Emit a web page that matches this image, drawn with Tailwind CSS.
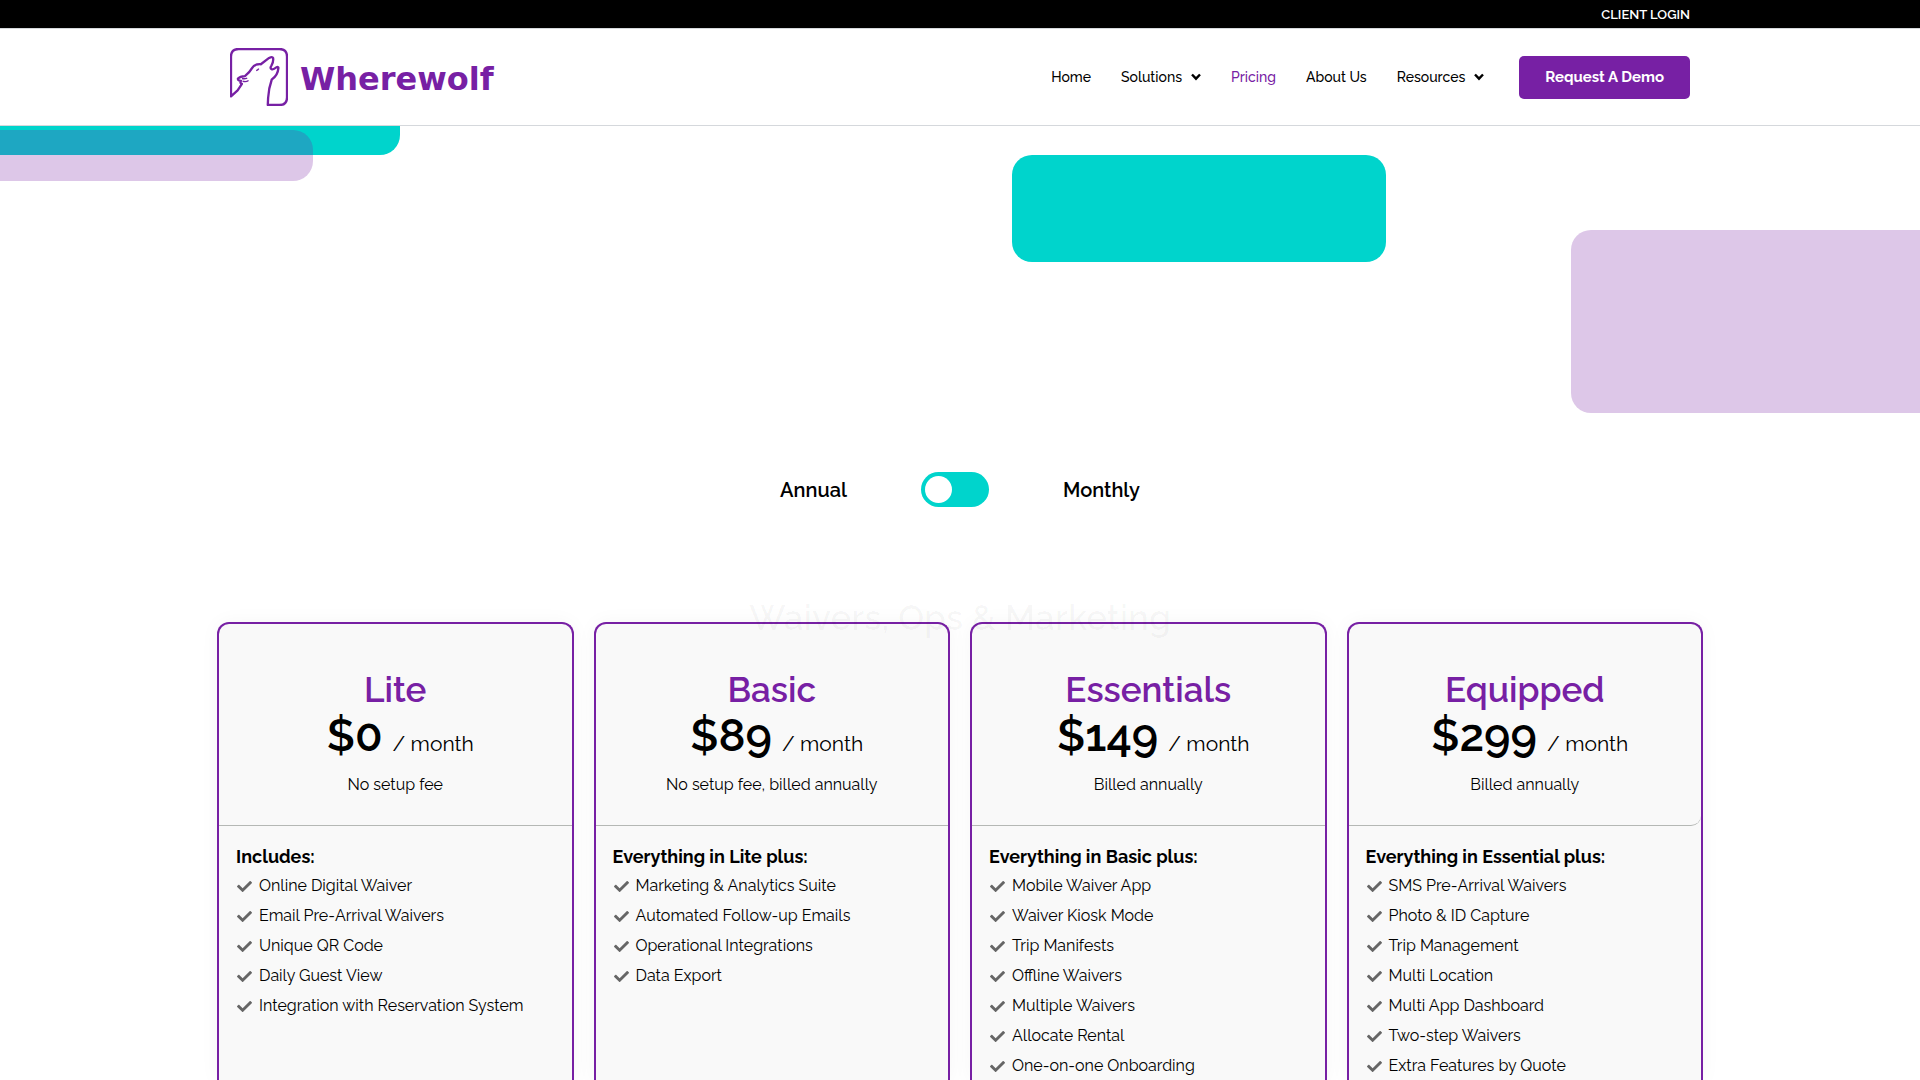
<!DOCTYPE html>
<html lang="en">
<head>
<meta charset="utf-8">
<title>Pricing – Wherewolf</title>
<script src="https://cdn.jsdelivr.net/npm/@tailwindcss/browser@4"></script>
</head>
<body class="flex h-screen flex-col overflow-hidden bg-white font-['Raleway','Open_Sans',sans-serif] text-black">
<svg class="hidden" aria-hidden="true">
  <symbol id="check" viewBox="0 0 512 512"><path fill="currentColor" d="M173.9 439.4l-166.4-166.4c-10-10-10-26.200 0-36.200l36.200-36.200c10-10 26.200-10 36.200 0L192 312.700 432.100 72.600c10-10 26.200-10 36.200 0l36.200 36.200c10 10 10 26.200 0 36.200l-294.400 294.400c-10 10-26.200 10-36.200 0z"/></symbol>
  <symbol id="chevron" viewBox="0 0 10 8"><path fill="none" stroke="currentColor" stroke-width="2.400" d="M1 1.500 5 5.700 9 1.500"/></symbol>
</svg>

<div class="h-7 shrink-0 bg-black">
  <div class="mx-auto flex h-full max-w-[1460px] items-end justify-end pb-[3px]">
    <a href="#" class="text-[13px] font-semibold leading-5 text-white">CLIENT LOGIN</a>
  </div>
</div>

<header class="h-[98px] shrink-0 border-y border-[#d5d8dc] bg-white">
  <div class="mx-auto flex h-full max-w-[1460px] items-center justify-between">
    <a href="#" class="flex items-center gap-3 text-[#7720a4]" aria-label="Wherewolf">
      <svg class="size-[58px]" viewBox="12 12 175 175" fill="none" stroke="currentColor" stroke-width="7" stroke-linejoin="round">
        <path d="M15 158V38Q15 15 38 15H161Q184 15 184 38V161Q184 184 161 184H126L127 163Q129 132 138 107Q156 96 158 73Q159 67 151 71Q144 78 137 76Q132 72 137 65Q144 53 142 42Q140 37 130 42L105 61Q86 60 79 72Q71 86 57 97Q42 98 36 104Q35 110 45 111Q41 119 48 120L35 140Z"/>
        <path stroke-width="4" d="M91 80Q96 79 99 74M48 104Q56 106 64 103M50 112Q60 116 68 110"/>
      </svg>
      <span class="pt-1 font-['DejaVu_Sans',sans-serif] text-[32px] font-bold leading-10">Wherewolf</span>
    </a>
    <nav class="flex items-center gap-[30px] text-sm font-medium">
      <a href="#">Home</a>
      <a href="#" class="flex items-center gap-[9px]">Solutions <svg class="h-2 w-[10px]"><use href="#chevron"/></svg></a>
      <a href="#" class="text-[#7720a4]">Pricing</a>
      <a href="#">About Us</a>
      <a href="#" class="flex items-center gap-[9px]">Resources <svg class="h-2 w-[10px]"><use href="#chevron"/></svg></a>
      <button type="button" class="ml-[5px] h-[43px] rounded-[5px] bg-[#7720a4] px-[26px] pt-px text-[15px] font-bold text-white">Request A Demo</button>
    </nav>
  </div>
</header>

<main class="flex flex-1 flex-col">
  <section class="relative flex h-[496px] shrink-0 justify-center overflow-hidden pt-[346px]">
    <!-- decorative blocks behind the hero -->
    <div class="absolute left-0 top-0 h-[29px] w-[400px] rounded-br-[20px] bg-[#00d4cc]"></div>
    <div class="absolute left-0 top-1 h-[51px] w-[313px] rounded-r-[20px] bg-[#7720a4]/25"></div>
    <div class="absolute left-[1012px] top-[29px] h-[107px] w-[374px] rounded-[20px] bg-[#00d4cc]"></div>
    <div class="absolute right-0 top-[104px] h-[183px] w-[349px] rounded-l-[20px] bg-[#7720a4]/25"></div>

    <div class="flex h-[35px] items-center gap-[74px] text-xl font-semibold">
      <span>Annual</span>
      <input type="checkbox" role="switch" aria-label="Bill monthly" class="h-[35px] w-[68px] appearance-none rounded-full bg-[#00d4cc] p-1 before:block before:size-[27px] before:rounded-full before:bg-white">
      <span>Monthly</span>
    </div>
  </section>

  <section class="relative flex flex-1 justify-center">
    <h2 class="absolute -top-6 z-10 text-[35px] font-semibold leading-10 text-black/[0.03]">Waivers, Ops &amp; Marketing</h2>
    <div id="plans" class="grid w-full max-w-[1486px] grid-cols-4 gap-5"></div>
  </section>
</main>

<script>
const plans = [
  { name: 'Lite', price: '$0', note: 'No setup fee', lead: 'Includes:',
    items: ['Online Digital Waiver', 'Email Pre-Arrival Waivers', 'Unique QR Code', 'Daily Guest View', 'Integration with Reservation System'] },
  { name: 'Basic', price: '$89', note: 'No setup fee, billed annually', lead: 'Everything in Lite plus:',
    items: ['Marketing &amp; Analytics Suite', 'Automated Follow-up Emails', 'Operational Integrations', 'Data Export'] },
  { name: 'Essentials', price: '$149', note: 'Billed annually', lead: 'Everything in Basic plus:',
    items: ['Mobile Waiver App', 'Waiver Kiosk Mode', 'Trip Manifests', 'Offline Waivers', 'Multiple Waivers', 'Allocate Rental', 'One-on-one Onboarding'] },
  { name: 'Equipped', price: '$299', note: 'Billed annually', lead: 'Everything in Essential plus:',
    items: ['SMS Pre-Arrival Waivers', 'Photo &amp; ID Capture', 'Trip Management', 'Multi Location', 'Multi App Dashboard', 'Two-step Waivers', 'Extra Features by Quote'] }
];
document.getElementById('plans').innerHTML = plans.map(p => `
  <article class="rounded-t-[12px] border-2 border-b-0 border-[#7720a4] bg-[#f9f9f9] shadow-[0_0_20px_rgba(0,0,0,0.04)]">
    <div class="border-b border-[#b5b8b5] pt-[46px] pb-7 text-center ${p.name === 'Equipped' ? 'rounded-br-[10px]' : ''}">
      <h3 class="text-[35px] font-semibold leading-10 text-[#7720a4]">${p.name}</h3>
      <p class="flex h-[51px] items-baseline justify-center gap-[10px] pl-[10px] leading-[51px]"><span class="text-[45px] font-semibold">${p.price}</span><span class="text-[21px]">/ month</span></p>
      <p class="mt-3 text-base leading-6">${p.note}</p>
    </div>
    <div class="px-[17px] pt-[17px]">
      <h4 class="text-lg font-bold leading-7">${p.lead}</h4>
      <ul>${p.items.map(t => `
        <li class="flex items-center gap-[7px] pl-px leading-[30px]"><svg class="size-[15px] text-[#666]"><use href="#check"/></svg>${t}</li>`).join('')}
      </ul>
    </div>
  </article>`).join('');
</script>
</body>
</html>
